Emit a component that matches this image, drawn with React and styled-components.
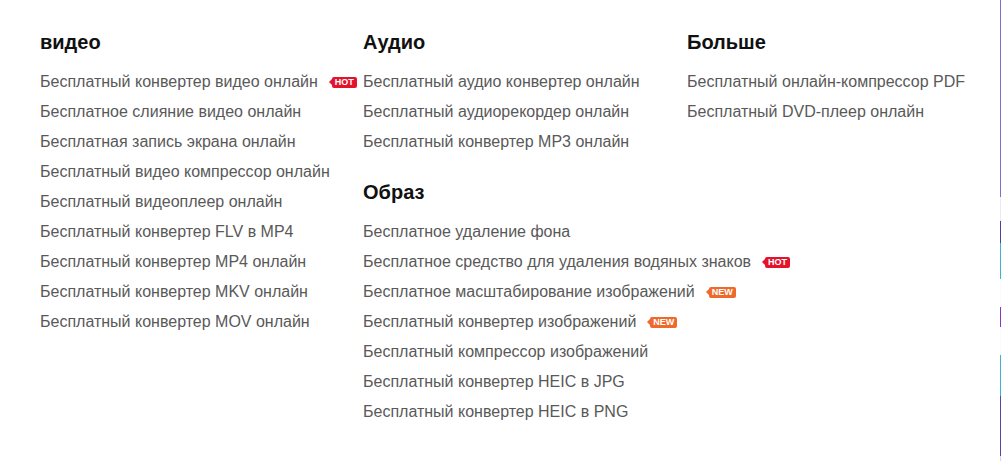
import React from 'react'
import styled, { createGlobalStyle } from 'styled-components'

const GlobalStyle = createGlobalStyle`
  html, body {
    margin: 0;
    padding: 0;
    background: #fff;
    font-family: Arial, "Liberation Sans", sans-serif;
  }
`

const sections = [
    {
        col: 1,
        groups: [
            {
                title: 'видео',
                items: [
                    { label: 'Бесплатный конвертер видео онлайн', badge: 'hot' },
                    { label: 'Бесплатное слияние видео онлайн' },
                    { label: 'Бесплатная запись экрана онлайн' },
                    { label: 'Бесплатный видео компрессор онлайн' },
                    { label: 'Бесплатный видеоплеер онлайн' },
                    { label: 'Бесплатный конвертер FLV в MP4' },
                    { label: 'Бесплатный конвертер MP4 онлайн' },
                    { label: 'Бесплатный конвертер MKV онлайн' },
                    { label: 'Бесплатный конвертер MOV онлайн' },
                ]
            }
        ]
    },
    {
        col: 2,
        groups: [
            {
                title: 'Аудио',
                items: [
                    { label: 'Бесплатный аудио конвертер онлайн' },
                    { label: 'Бесплатный аудиорекордер онлайн' },
                    { label: 'Бесплатный конвертер MP3 онлайн' },
                ]
            },
            {
                title: 'Образ',
                items: [
                    { label: 'Бесплатное удаление фона' },
                    { label: 'Бесплатное средство для удаления водяных знаков', badge: 'hot' },
                    { label: 'Бесплатное масштабирование изображений', badge: 'new' },
                    { label: 'Бесплатный конвертер изображений', badge: 'new' },
                    { label: 'Бесплатный компрессор изображений' },
                    { label: 'Бесплатный конвертер HEIC в JPG' },
                    { label: 'Бесплатный конвертер HEIC в PNG' },
                ]
            }
        ]
    },
    {
        col: 3,
        groups: [
            {
                title: 'Больше',
                items: [
                    { label: 'Бесплатный онлайн-компрессор PDF' },
                    { label: 'Бесплатный DVD-плеер онлайн' },
                ]
            }
        ]
    }
]

function App() {
    return (
        <>
            <GlobalStyle />
            <Page>
                <Columns>
                    {sections.map(section => (
                        <Column key={section.col}>
                            {section.groups.map(group => (
                                <Group key={group.title}>
                                    <Title>{group.title}</Title>
                                    <List>
                                        {group.items.map(item => (
                                            <Item key={item.label}>
                                                <ItemLink href="#">{item.label}</ItemLink>
                                                {item.badge && <Badge kind={item.badge}>{item.badge.toUpperCase()}</Badge>}
                                            </Item>
                                        ))}
                                    </List>
                                </Group>
                            ))}
                        </Column>
                    ))}
                </Columns>
            </Page>
        </>
    )
}

// thin coloured strip on the right edge comes from the page border
const Page = styled.div`
  box-sizing: border-box;
  width: 1001px;
  height: 461px;
  padding: 30px 0 0 40px;
  border-right: 1px solid transparent;
  border-image: linear-gradient(
    to bottom,
    #7c6ed2 0px, #7c6ed2 197px,
    #ece8f8 197px, #ece8f8 221px,
    #4f3fa8 221px, #4f3fa8 243px,
    #3bb3d4 243px, #3bb3d4 279px,
    #fbfbfd 279px, #fbfbfd 307px,
    #8a34c8 307px, #8a34c8 327px,
    #fbfbfd 327px, #fbfbfd 354px,
    #3bb3d4 354px, #3bb3d4 395px,
    #5a42b4 395px, #5a42b4 455px,
    #d9d4f0 455px, #d9d4f0 461px
  ) 1;
`

const Columns = styled.div`
  display: grid;
  grid-template-columns: 323px 324px 1fr;
`

const Column = styled.div`
  display: flex;
  flex-direction: column;
  gap: 23px;
`

const Group = styled.div`
  display: flex;
  flex-direction: column;
`

const Title = styled.h3`
  margin: 0;
  height: 24px;
  line-height: 24px;
  font-size: 20px;
  font-weight: 700;
  color: #111;
`

const List = styled.ul`
  list-style: none;
  margin: 13px 0 0;
  padding: 0;
`

const Item = styled.li`
  display: flex;
  align-items: center;
  height: 30px;
`

const ItemLink = styled.a`
  font-size: 16px;
  color: #595959;
  text-decoration: none;
  white-space: nowrap;
`

const Badge = styled.span`
  position: relative;
  margin-left: 14px;
  height: 11px;
  padding: 0 3px;
  border-radius: 2px;
  background: ${p => (p.kind === 'new' ? '#ec6a2c' : '#e3122d')};
  color: #fff;
  font-size: 9px;
  font-weight: 700;
  line-height: 11px;

  &::before {
    content: '';
    position: absolute;
    left: -3px;
    top: 2.5px;
    border-top: 3px solid transparent;
    border-bottom: 3px solid transparent;
    border-right: 3px solid ${p => (p.kind === 'new' ? '#ec6a2c' : '#e3122d')};
  }
`

export default App
